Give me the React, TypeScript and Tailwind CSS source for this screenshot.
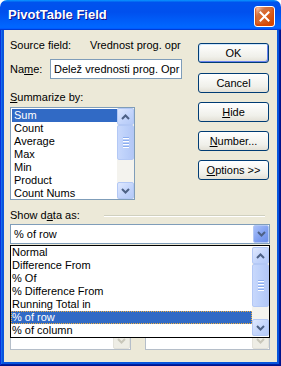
import React from 'react';

const font = "font-['Liberation_Sans',Arial,sans-serif]";

const Chevron = ({ up, color }: { up?: boolean; color: string }) => (
  <svg width="9" height="6" viewBox="0 0 9 6">
    <path d={up ? 'M1 5 L4.5 1.5 L8 5' : 'M1 1 L4.5 4.5 L8 1'} stroke={color} strokeWidth="2" fill="none" />
  </svg>
);

const ArrowBtn = ({ up, disabled }: { up?: boolean; disabled?: boolean }) => (
  <div
    className={
      disabled
        ? 'h-[17px] w-[17px] rounded-[2px] border border-[#e3e2da] bg-[#eeede5] flex items-center justify-center'
        : 'h-[17px] w-[17px] rounded-[2px] border border-[#b3c8f5] bg-[linear-gradient(135deg,#dfe8fe,#c1d3fb_60%,#b4c9f7)] flex items-center justify-center'
    }
  >
    <Chevron up={up} color={disabled ? '#c9c7ba' : '#4d6185'} />
  </div>
);

const Thumb = ({ h }: { h: number }) => (
  <div
    className="w-[17px] rounded-[2px] border border-[#b3c8f5] bg-[linear-gradient(90deg,#c8d8fc,#bcd0fa_50%,#b3c7f6)] flex flex-col items-center justify-center gap-[1px]"
    style={{ height: h }}
  >
    {[0, 1, 2, 3].map((i) => (
      <div key={i} className="w-[6px] h-[2px] border-t border-[#8caef0] border-b-white border-b" />
    ))}
  </div>
);

const ScrollBar = ({ thumb }: { thumb: number }) => (
  <div className="w-[17px] h-full flex flex-col bg-[#f4f3ee]">
    <ArrowBtn up />
    <Thumb h={thumb} />
    <div className="flex-1" />
    <ArrowBtn />
  </div>
);

const Button = ({ children, main }: { children: React.ReactNode; main?: boolean }) => (
  <div
    className={
      'h-[20px] w-[71px] rounded-[3px] border border-[#003c74] bg-[linear-gradient(180deg,#ffffff,#f0f0ea_70%,#e3e0d6)] flex items-center justify-center leading-[13px] ' +
      (main ? 'shadow-[inset_1px_1px_#cee7ff,inset_-1px_-1px_#6982ee]' : '')
    }
  >
    {children}
  </div>
);

const summarize = ['Sum', 'Count', 'Average', 'Max', 'Min', 'Product', 'Count Nums'];
const showAs = ['Normal', 'Difference From', '% Of', '% Difference From', 'Running Total in', '% of row', '% of column'];

export default function App() {
  return (
    <div className={`w-[281px] h-[366px] flex flex-col text-[11px] text-black ${font}`}>
      {/* title bar */}
      <div className="h-[30px] shrink-0 rounded-t-[7px] bg-[linear-gradient(180deg,#0997ff,#0053ee_8%,#0050ee_40%,#0066ff_88%,#0066ff_93%,#005bff_95%,#003dd7_96%,#003dd7)] flex pl-[8px] pr-[6px]">
        <span className="mt-[7px] font-bold text-[13px] leading-[16px] text-white [text-shadow:1px_1px_#0f1089]">
          PivotTable Field
        </span>
        <div className="ml-auto mt-[6px] w-[21px] h-[21px] rounded-[3px] border border-white bg-[radial-gradient(circle_at_90%_90%,#cc4600_0%,#dc6527_55%,#cd7546_70%,#ffccb2_90%,#ffffff_100%)] shadow-[inset_0_-1px_2px_1px_#da4600] flex items-center justify-center">
          <svg width="11" height="11" viewBox="0 0 11 11">
            <path d="M1.5 1.5 L9.5 9.5 M9.5 1.5 L1.5 9.5" stroke="white" strokeWidth="2" strokeLinecap="square" />
          </svg>
        </div>
      </div>

      {/* frame + client */}
      <div className="flex-1 bg-[#0855dd] px-[4px] pb-[4px] shadow-[inset_-1px_-1px_#00138c,inset_1px_0_#0831d9,inset_-2px_-2px_#001ea0,inset_2px_0_#166aee]">
        <div className="h-full bg-[#ece9d8] pl-[6px] pr-[8px] pt-[9px]">
          <div className="flex">
            <div className="w-[172px]">
              <div className="flex leading-[13px] whitespace-nowrap">
                <span className="w-[80px]">Source field:</span>
                <span>Vrednost prog. opr</span>
              </div>
              <div className="mt-[7px] flex items-center">
                <span className="w-[40px] leading-[13px]">
                  Na<u className="underline-offset-1">m</u>e:
                </span>
                <div className="w-[132px] h-[20px] border border-[#7f9db9] bg-white pl-[3px] leading-[18px] whitespace-nowrap overflow-hidden">
                  Delež vrednosti prog. Opr
                </div>
              </div>
              <div className="mt-[12px] leading-[13px]">
                <u className="underline-offset-1">S</u>ummarize by:
              </div>
              <div className="mt-[3px] w-[125px] h-[93px] border border-[#7f9db9] bg-white flex">
                <div className="flex-1 p-[1px] pr-0">
                  {summarize.map((s, i) => (
                    <div
                      key={s}
                      className={
                        'h-[13px] leading-[13px] pl-[2px] whitespace-nowrap ' +
                        (i === 0 ? 'bg-[#316ac5] text-white' : '')
                      }
                    >
                      {s}
                    </div>
                  ))}
                </div>
                <ScrollBar thumb={35} />
              </div>
            </div>

            <div className="ml-[16px] pt-[4px] flex flex-col">
              <Button main>OK</Button>
              <div className="mt-[10px]">
                <Button>Cancel</Button>
              </div>
              <div className="mt-[9px]">
                <Button>
                  <u className="underline-offset-1">H</u>ide
                </Button>
              </div>
              <div className="mt-[9px]">
                <Button>
                  <u className="underline-offset-1">N</u>umber...
                </Button>
              </div>
              <div className="mt-[9px]">
                <Button>
                  <u className="underline-offset-1">O</u>ptions &gt;&gt;
                </Button>
              </div>
            </div>
          </div>

          {/* show data as */}
          <div className="mt-[9px] flex items-center leading-[13px]">
            <span className="w-[94px] shrink-0">
              Show d<u className="underline-offset-1">a</u>ta as:
            </span>
            <div className="flex-1 mr-[4px] h-[2px] border-t border-[#d0d0bf] border-b border-b-white" />
          </div>

          <div className="relative mt-[2px] w-[260px]">
            <div className="h-[20px] border border-[#7f9db9] bg-white flex items-center">
              <span className="flex-1 pl-[3px] leading-[13px]">% of row</span>
              <div className="w-[16px] h-[18px] rounded-[2px] border border-[#b3c8f5] bg-[linear-gradient(135deg,#a9c0f8,#7f9ff0_60%,#6d8fe8)] flex items-center justify-center">
                <Chevron color="#4d6185" />
              </div>
            </div>

            <div className="mt-[8px] flex justify-between">
              {[121, 125].map((w) => (
                <div key={w} className="h-[98px] border border-[#b5bec9] bg-white flex justify-end" style={{ width: w }}>
                  <div className="w-[17px] h-full flex flex-col justify-end pb-[0px]">
                    <ArrowBtn disabled />
                  </div>
                </div>
              ))}
            </div>

            {/* open dropdown */}
            <div className="absolute left-0 top-[21px] w-[260px] h-[93px] border border-black bg-white flex">
              <div className="flex-1">
                {showAs.map((s) => (
                  <div
                    key={s}
                    className={
                      'h-[13px] leading-[13px] pl-[1px] whitespace-nowrap ' +
                      (s === '% of row'
                        ? 'bg-[#316ac5] text-white outline-1 outline-dotted outline-[#f0b040] -outline-offset-1'
                        : '')
                    }
                  >
                    {s}
                  </div>
                ))}
              </div>
              <div className="py-[1px]">
                <ScrollBar thumb={43} />
              </div>
            </div>
          </div>
        </div>
      </div>
    </div>
  );
}
